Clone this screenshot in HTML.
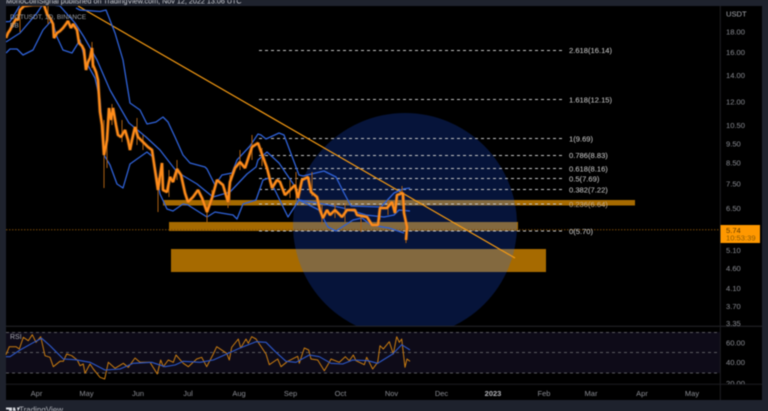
<!DOCTYPE html>
<html><head><meta charset="utf-8"><style>
html,body{margin:0;padding:0;background:#1e222d;width:768px;height:411px;overflow:hidden}
svg{display:block;filter:blur(.4px)}
svg svg{filter:none}
text{font-family:"Liberation Sans",sans-serif}
</style></head><body>
<svg width="768" height="411" viewBox="0 0 768 411" xmlns="http://www.w3.org/2000/svg">
<defs>
<clipPath id="ch"><rect x="6" y="6" width="714" height="320"/></clipPath>
<clipPath id="circ"><circle cx="405" cy="225" r="112"/></clipPath>
<polyline id="cndl" fill="none" stroke-linejoin="bevel" points="6,38 8,33 10,30 13,24 16,19 18,20 20,10 24,6 33,5 44,5 47,14 50,18 53,24 54,38 57,33 60,31 63,28 66,24 68,21 71,28 73,24 77,30 79,43 82,46 84,50 86,70 88,62 90,58 92,48 93,65 96,72 98,80 100,112 102,125 104,155 107,140 109,108 111,120 113,108 116,125 118,135 121,137 125,130 128,140 130,150 132,140 135,127 138,137 143,142 148,147 152,150 155,170 158,190 162,163 163,190 167,192 170,177 173,182 177,169 181,175 185,193 188,202 193,197 198,190 202,198 207,212 212,198 217,180 223,185 228,202 230,182 235,168 240,162 245,168 252,147 258,143 263,157 267,168 272,188 277,180 280,182 285,195 290,190 295,185 298,198 302,180 308,177 311,192 317,197 320,210 323,218 327,210 330,215 335,210 342,217 347,210 355,210 357,215 367,217 372,225 378,225 380,208 387,208 392,202 395,213 397,195 403,193 404,213 407,227 406,240"/>
</defs>
<rect width="768" height="411" fill="#1e222d"/>
<rect x="6" y="6" width="756" height="394" fill="#000"/>
<text x="6" y="3.500" font-size="7.200" fill="#d0d2d8">MonoCoinSignal published on TradingView.com, Nov 12, 2022 13:06 UTC</text>

<g clip-path="url(#ch)">
<circle cx="405" cy="225" r="112" fill="#06143a"/>
<g fill="#a66a00">
<rect x="163" y="200" width="472" height="5.500"/>
<rect x="169" y="222" width="349" height="9"/>
<rect x="171" y="249" width="375" height="23"/>
</g>
<g fill="#83693f" clip-path="url(#circ)">
<rect x="163" y="200" width="472" height="5.500"/>
<rect x="169" y="222" width="349" height="9"/>
<rect x="171" y="249" width="375" height="23"/>
</g>
<line x1="6" x2="720" y1="229.700" y2="229.700" stroke="#7a4a08" stroke-width="1" stroke-dasharray="1.500 1.500"/>
<g stroke="#c4c4c4" stroke-width="1" stroke-dasharray="3 3">
<line x1="259" x2="562" y1="50.500" y2="50.500"/>
<line x1="259" x2="562" y1="99.500" y2="99.500"/>
<line x1="259" x2="562" y1="138.500" y2="138.500"/>
<line x1="259" x2="562" y1="155.500" y2="155.500"/>
<line x1="259" x2="562" y1="168.500" y2="168.500"/>
<line x1="259" x2="562" y1="178.500" y2="178.500"/>
<line x1="259" x2="562" y1="189.500" y2="189.500"/>
<line x1="259" x2="562" y1="204" y2="204"/>
<line x1="259" x2="562" y1="231" y2="231"/>
</g>
<line x1="78" y1="6" x2="515" y2="258" stroke="#f59a12" stroke-width="1.200"/>
<g fill="none" stroke="#2f62d8" stroke-width="1.300" stroke-linejoin="round">
<polyline points="6,21.700 10,21.500 16,12 20,5"/>
<polyline points="76,8 80,10 100,11.500 106,10 115,33 123,60 130,103 140,110 147,124 156,122 163,117 168,122 175,137 183,155 190,163 205,167 207,169 215,185 222,175 232,173 237,160 250,146 258,134 261,135 266,139 279,133 284,135 299,175 303,176 324,171 336,177 344,193 351,206 381,207 394,193 403,189 410,188"/>
<polyline points="6,42 20,33 37,13 43,4"/>
<polyline points="52,5 60,6 75,23 84,37 97,60 110,90 129,123 146,137 160,150 177,172 197,184 213,197 230,192 247,174 256,167 258,160 267,152 279,163 296,188 299,200 318,203 343,208 366,215 384,217 394,215 399,210 410,211"/>
<polyline points="6,53 10,49 17,49 23,55 33,50 43,30 52,20 57,37 63,50 72,53 80,40 85,60 95,78 100,100 104,155 110,165 117,184 123,188 130,164 137,159 147,152 153,157 160,194 167,209 173,211 183,204 188,205 207,217 215,212 233,215 237,219 243,204 256,200 263,180 269,178 288,217 299,200 319,210 328,227 336,231 353,220 362,218 371,225 389,228 404,233"/>
</g>
<g stroke="#a85e12" stroke-width="1" fill="none">
<path d="M104 120V188M158 178V212M207 205V222M230 175V205M107 135V168M137 118V145M252 135V160M296 172V200M312 172V196M361 215V232M402 186V200M406 225V243M335 204V218M169 170V197M228 195V208M20 18V32M48 5V24M92 42V68M112 104V125M122 120V142M143 135V150M177 160V180M212 190V205M240 150V170M262 148V166M290 180V198M322 205V224M345 203V222M380 205V220M388 200V215"/>
</g>
<use href="#cndl" stroke="#b5651a" stroke-width="3.600" opacity=".5"/>
<use href="#cndl" stroke="#ff8c1a" stroke-width="2.200"/>
</g>

<g font-size="7.600" fill="#d4d4d4">
<text x="569" y="53">2.618(16.14)</text>
<text x="569" y="102.500">1.618(12.15)</text>
<text x="569" y="141.500">1(9.69)</text>
<text x="569" y="158">0.786(8.83)</text>
<text x="569" y="171.500">0.618(8.16)</text>
<text x="569" y="181.500">0.5(7.69)</text>
<text x="569" y="192.500">0.382(7.22)</text>
<text x="569" y="207" fill="#c4ad8e">0.236(6.64)</text>
<text x="569" y="234">0(5.70)</text>
</g>
<text x="10" y="19" font-size="6.600" fill="#a0a3aa">DOTUSDT, 1D, BINANCE</text>
<text x="10" y="27.500" font-size="6.600" fill="#a0a3aa">BB</text>

<rect x="6" y="332" width="714" height="41" fill="#0e0b18"/>
<g stroke="#5a5a60" stroke-width="1" stroke-dasharray="3 3">
<line x1="6" x2="720" y1="332.500" y2="332.500"/>
<line x1="6" x2="720" y1="352.500" y2="352.500"/>
<line x1="6" x2="720" y1="373" y2="373"/>
</g>
<line x1="6" x2="762" y1="326.300" y2="326.300" stroke="#26262b"/>
<line x1="6" x2="762" y1="384.300" y2="384.300" stroke="#1c1c20"/>
<line x1="720.300" x2="720.300" y1="6" y2="400" stroke="#1f1f24"/>
<text x="10" y="339" font-size="7" fill="#a8a9af">RSI</text>

<g fill="none" stroke-linejoin="round">
<polyline stroke="#c97c10" stroke-width="1" points="6,354.700 9.300,346.700 16,346.700 19.300,349 23.300,337.300 28.300,340.700 32.300,334.700 36,342.300 40.700,336.700 45,355.700 50,357.300 53.300,366.700 60,361.300 63.300,361.300 66.700,354 71.700,355.700 77.300,360 80,365.700 83.300,364 85,373.300 90,364 93.300,369 100,377.300 104.700,379 108.300,362.300 115,368.300 123.300,363.300 128.300,367.300 135,358 140,362.300 150,362.300 157.300,374 160.700,360 163.300,366.700 168.300,360 173.300,362.300 176,355 183.300,363.300 188.300,366.700 196.700,359 201.700,357.300 206.700,366.700 213.300,354 216.700,346.700 226.700,353.300 229.300,360 231.700,347.300 238.300,339 240.700,348 246,339 248.300,343.300 251.700,336.700 256,339 266,354 269.300,364.700 277.700,359 281,366.700 287.700,361.300 297.700,356.300 299.300,363.300 304.300,348 308.700,350 311,359 317.700,360 324.300,370.700 329.300,362.300 331,359 339.300,362.300 345.300,356.700 349.300,360.700 353.300,355 356,360.700 364.300,364.700 366.700,357.300 372.700,369 377.700,362.300 380,345.700 383.300,349 389.300,341.700 393.300,354 396.700,336.700 399.300,342.300 401.700,339 405,367.300 407,359 410,361.300"/>
<polyline stroke="#2d58c8" stroke-width="1.100" points="6,356.700 10,356.700 20,350 35,341.700 41.700,338.300 50,345.700 63.300,359 75,359.700 90,362.300 105,370 120,369 133.300,363.300 151.700,362.300 165,366.700 175,365 183.300,361.300 200,362.300 213.300,360 226.700,354 240,348 256,341.700 266,342.300 276,352.300 286,361.300 296,362.300 309.300,355 319.300,356.700 331,363.300 342.700,364 352.700,360 367.700,360.700 377.700,363.300 392.700,354 401.700,344.700 410,350"/>
</g>

<g font-size="7.600" fill="#8a8c93">
<text x="726" y="16.500" fill="#a8aab0">USDT</text>
<text x="726" y="34.500">18.00</text>
<text x="726" y="55">16.00</text>
<text x="726" y="78">14.00</text>
<text x="726" y="104.500">12.00</text>
<text x="726" y="128">10.50</text>
<text x="726" y="146.500">9.50</text>
<text x="726" y="165.500">8.50</text>
<text x="726" y="186.500">7.50</text>
<text x="726" y="211">6.50</text>
<text x="726" y="253">5.10</text>
<text x="726" y="271">4.60</text>
<text x="726" y="291">4.10</text>
<text x="726" y="309">3.70</text>
<text x="726" y="326">3.35</text>
<text x="726" y="345.500">60.00</text>
<text x="726" y="365">40.00</text>
</g>
<svg x="720" y="378" width="42" height="6"><text x="6" y="8" font-size="7.600" fill="#8a8c93">20.00</text></svg>
<rect x="720.500" y="225" width="39.500" height="18" fill="#ff9800"/>
<text x="726" y="232.800" font-size="7.600" fill="#5e3a00">5.74</text>
<text x="726" y="240.500" font-size="7.600" fill="#8f5a00">10:53:39</text>

<g font-size="7.500" fill="#8a8c93" text-anchor="middle">
<text x="36.500" y="396">Apr</text>
<text x="86.500" y="396">May</text>
<text x="138" y="396">Jun</text>
<text x="188" y="396">Jul</text>
<text x="239" y="396">Aug</text>
<text x="290.500" y="396">Sep</text>
<text x="340.500" y="396">Oct</text>
<text x="391.500" y="396">Nov</text>
<text x="441.500" y="396">Dec</text>
<text x="493" y="396" font-weight="bold" fill="#b0b1b6">2023</text>
<text x="544" y="396">Feb</text>
<text x="591" y="396">Mar</text>
<text x="642" y="396">Apr</text>
<text x="692" y="396">May</text>
</g>
<path d="M6 407.500h6v4h-3v-2h-3zM13 407.500h2l1 4h-3zM17 407.500h3l-2 4z" fill="#d4d6dc"/>
<text x="19" y="412.300" font-size="8" fill="#b4b6bd">TradingView</text>
</svg>
</body></html>
